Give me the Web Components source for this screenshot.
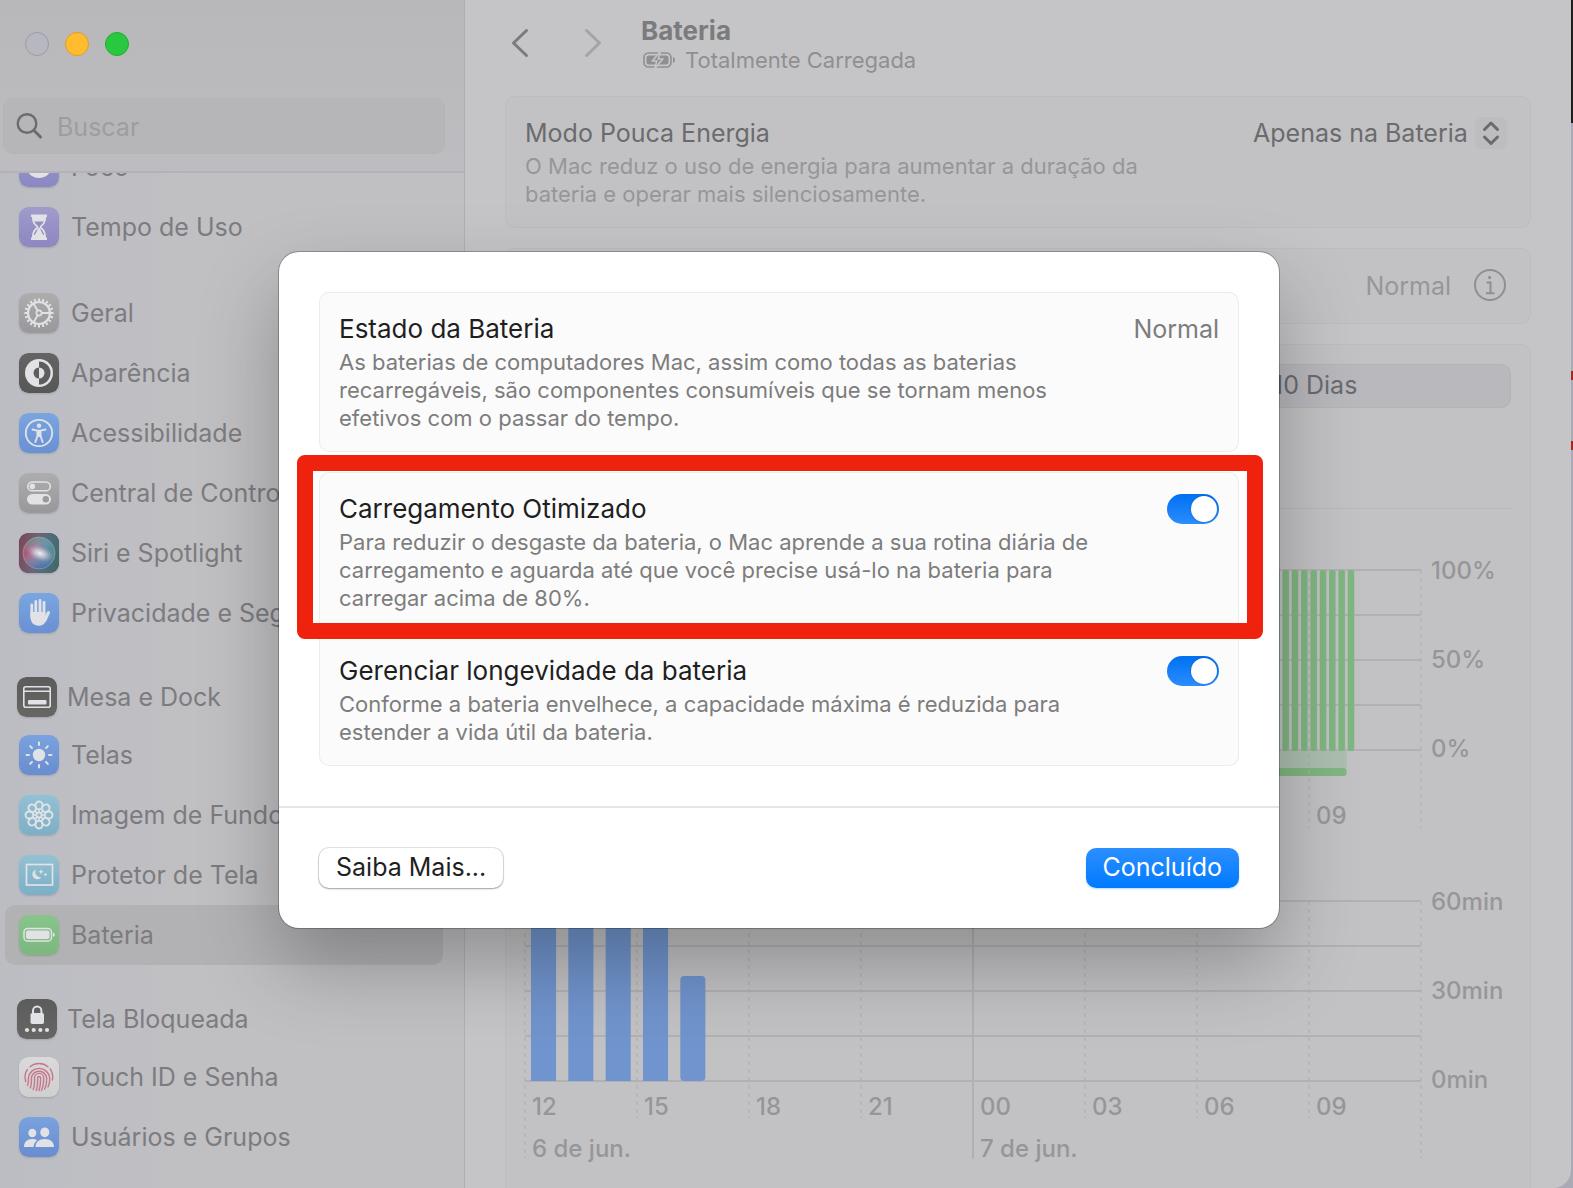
<!DOCTYPE html>
<html lang="pt-BR">
<head>
<meta charset="utf-8">
<title>Bateria</title>
<style>
    html, body {
        height: 100%;
        margin: 0;
        overflow: hidden;
    }

    body {
        font-family: Inter, "Liberation Sans", sans-serif;
        font-size: 25px;
        line-height: 34px;
        color: #6b6b6e;
        background:
            linear-gradient(#a5281f, #a5281f) right 371px / 2px 9px no-repeat,
            linear-gradient(#a5281f, #a5281f) right 441px / 2px 9px no-repeat,
            linear-gradient(#1f1f20, #1f1f20) right top / 2px 123px no-repeat,
            #a9aab6;
    }
</style>
</head>
<body>

<mac-window>
    <side-bar slot="sidebar">
        <side-group>
            <side-item icon="moon">Foco</side-item>
            <side-item icon="hourglass">Tempo de Uso</side-item>
        </side-group>
        <side-group>
            <side-item icon="gear">Geral</side-item>
            <side-item icon="contrast">Aparência</side-item>
            <side-item icon="access">Acessibilidade</side-item>
            <side-item icon="toggles">Central de Controle</side-item>
            <side-item icon="siri">Siri e Spotlight</side-item>
            <side-item icon="hand">Privacidade e Segurança</side-item>
        </side-group>
        <side-group>
            <side-item icon="dock" lead>Mesa e Dock</side-item>
            <side-item icon="sun">Telas</side-item>
            <side-item icon="flower">Imagem de Fundo</side-item>
            <side-item icon="saver">Protetor de Tela</side-item>
            <side-item icon="battery" selected>Bateria</side-item>
        </side-group>
        <side-group>
            <side-item icon="lock" lead>Tela Bloqueada</side-item>
            <side-item icon="finger">Touch ID e Senha</side-item>
            <side-item icon="users">Usuários e Grupos</side-item>
        </side-group>
    </side-bar>

    <pane-header slot="header">
        <span slot="title">Bateria</span>
        <span slot="status">Totalmente Carregada</span>
    </pane-header>

    <settings-card>
        <setting-row>
            <span slot="title">Modo Pouca Energia</span>
            <span slot="text">O Mac reduz o uso de energia para aumentar a duração da bateria e operar mais silenciosamente.</span>
            <popup-select slot="value" label="Modo Pouca Energia">Apenas na Bateria</popup-select>
        </setting-row>
    </settings-card>
    <settings-card>
        <setting-row>
            <span slot="title">Estado da Bateria</span>
            <info-value slot="value">Normal</info-value>
        </setting-row>
    </settings-card>
    <settings-card>
        <battery-usage></battery-usage>
    </settings-card>

    <mac-sheet slot="sheet">
        <settings-card>
            <setting-row>
                <span slot="title">Estado da Bateria</span>
                <span slot="text">As baterias de computadores Mac, assim como todas as baterias recarregáveis, são componentes consumíveis que se tornam menos efetivos com o passar do tempo.</span>
                <span slot="value">Normal</span>
            </setting-row>
        </settings-card>
        <settings-card>
            <setting-row switch marked>
                <span slot="title">Carregamento Otimizado</span>
                <span slot="text">Para reduzir o desgaste da bateria, o Mac aprende a sua rotina diária de carregamento e aguarda até que você precise usá-lo na bateria para carregar acima de 80%.</span>
            </setting-row>
            <setting-row switch>
                <span slot="title">Gerenciar longevidade da bateria</span>
                <span slot="text">Conforme a bateria envelhece, a capacidade máxima é reduzida para estender a vida útil da bateria.</span>
            </setting-row>
        </settings-card>
        <push-button slot="actions">Saiba Mais...</push-button>
        <push-button slot="actions" primary>Concluído</push-button>
    </mac-sheet>
</mac-window>

<script>
// [top colour, bottom colour, glyph] on a 40x40 tile
const W = "#e1e2e5";
const ray = (n, draw) => Array.from({length: n}, (_, i) => draw(i * 360 / n)).join("");
const ICONS = {
    moon: ["#9b97cf", "#8b87c2", `<circle cx="20" cy="18" r="13" fill="${W}"/>`],
    hourglass: ["#9f9bcb", "#8c87c1", `
        <path fill="${W}" d="M12 7.500h16v2.500h-1c0 5-1.500 7.500-4.800 10c3.300 2.500 4.800 5 4.800 10.500h1V33H12v-2.500h1c0-5.500 1.500-8 4.800-10.500C14.500 17.500 13 15 13 10h-1z"/>
        <path fill="#928dc3" d="M15.300 14h9.400c-.7 2-1.800 3.400-3.700 5v2.400c2.300 1.600 3.700 3.300 4.300 7L20.800 25h-1.600l-4.500 3.400c.6-3.700 2-5.400 4.300-7V19c-1.900-1.600-3-3-3.700-5z"/>
        <path fill="${W}" d="M15.500 12h9v2.500h-9zM20 19.500l5 10.500H15z"/>`],
    gear: ["#adadae", "#98989a", `
        <g fill="none" stroke="${W}"><circle cx="20" cy="20" r="11" stroke-width="2.200"/>
        <circle cx="20" cy="20" r="2.600" stroke-width="1.600"/>
        ${ray(20, a => `<path stroke-width="2" d="M32 20h2.600" transform="rotate(${a} 20 20)"/>`)}
        ${ray(3, a => `<path stroke-width="1.800" d="M22.600 20H31" transform="rotate(${a} 20 20)"/>`)}</g>`],
    contrast: ["#646464", "#575757", `
        <circle cx="20" cy="20" r="14" fill="${W}"/><path fill="#5d5d5d" d="M20 8.500a11.500 11.500 0 0 1 0 23z"/>
        <path fill="#5d5d5d" d="M20 14.500a5.500 5.500 0 0 0 0 11z"/><path fill="${W}" d="M20 14.500a5.500 5.500 0 0 1 0 11z"/>`],
    access: ["#7aa6e0", "#6990d3", `
        <circle cx="20" cy="20" r="13.200" fill="none" stroke="${W}" stroke-width="1.800"/>
        <circle cx="20" cy="12.800" r="2.200" fill="${W}"/>
        <path fill="none" stroke="${W}" stroke-width="1.900" stroke-linecap="round" stroke-linejoin="round" d="M13.500 16.500l5 1.200h3l5-1.200M18.500 18v5L16.300 29M21.500 18v5l2.200 6"/>
        <path fill="${W}" d="M17.800 17.500h4.400v6.500h-4.400z"/>`],
    toggles: ["#adadae", "#98989a", `
        <rect x="8.800" y="9" width="22.500" height="8.800" rx="4.400" fill="none" stroke="${W}" stroke-width="1.600"/>
        <circle cx="13.300" cy="13.400" r="2.800" fill="${W}"/>
        <rect x="8" y="21" width="24" height="10.500" rx="5.250" fill="${W}"/><circle cx="26.800" cy="26.250" r="3.200" fill="#9a9a9c"/>`],
    siri: ["#77455a", "#3f4250", `
        <defs><linearGradient id="b" x1="0" y1=".4" x2="1" y2=".6"><stop offset="0" stop-color="#b84a68"/><stop offset=".4" stop-color="#a07c9a"/><stop offset=".7" stop-color="#5f8fa8"/><stop offset="1" stop-color="#4b8780"/></linearGradient>
        <linearGradient id="o" x1=".3" y1="0" x2=".5" y2="1"><stop offset="0" stop-color="#5a9a8c" stop-opacity=".8"/><stop offset=".45" stop-color="#7fa5ba" stop-opacity="0"/><stop offset="1" stop-color="#446ba8" stop-opacity=".9"/></linearGradient>
        <radialGradient id="w"><stop offset="0" stop-color="#eef2f3"/><stop offset=".45" stop-color="#d5cfdd" stop-opacity=".7"/><stop offset="1" stop-color="#b493b4" stop-opacity="0"/></radialGradient></defs>
        <rect width="40" height="40" rx="9" fill="#3c4a50"/><rect width="40" height="40" rx="9" fill="url(#b)" opacity=".5"/>
        <circle cx="20" cy="20" r="16" fill="url(#b)"/><circle cx="20" cy="20" r="16" fill="url(#o)" stroke="#a5b3b5" stroke-opacity=".5"/>
        <ellipse cx="21" cy="20" rx="14" ry="8" fill="url(#w)" transform="rotate(20 20 20)"/>`],
    hand: ["#7aa6e0", "#6990d3", `
        <g fill="none" stroke="${W}" stroke-width="2.800" stroke-linecap="round"><path d="M12.800 12v12M16.800 8.500V22M21 7.500V22M25 9.500V23"/><path stroke-width="3" d="M29.500 19.500L26 27"/></g>
        <path fill="${W}" d="M11.400 19h15v5.500l2.300-1.500c-1.400 5.500-3.700 9.800-8.500 9.800c-6 0-8.800-3.800-8.800-9.800z"/>`],
    dock: ["#5c5c5c", "#666664", `
        <rect x="6.800" y="9.800" width="26.400" height="20.400" rx="2" fill="none" stroke="${W}" stroke-width="1.600"/>
        <path stroke="${W}" stroke-width="1.400" d="M7 14.300h26"/><rect x="11" y="23" width="18.500" height="4.500" rx="1" fill="${W}"/>`],
    sun: ["#7aa2de", "#698dcf", `
        <circle cx="20" cy="20" r="6.200" fill="${W}"/>
        ${ray(8, a => `<path stroke="${W}" stroke-width="2" stroke-linecap="round" d="M30 20h2.500" transform="rotate(${a} 20 20)"/>`)}`],
    flower: ["#93c1d4", "#7cafc6", `
        <g fill="none" stroke="${W}" stroke-width="2">
        ${ray(8, a => `<ellipse cx="29.600" cy="20" rx="3.900" ry="3.600" transform="rotate(${a} 20 20)"/><path stroke-width="1.500" d="M23 20h3" transform="rotate(${a} 20 20)"/>`)}
        <circle cx="20" cy="20" r="2.600"/></g>`],
    saver: ["#93c1d4", "#7cafc6", `
        <rect x="7.500" y="9.500" width="26" height="20.500" fill="none" stroke="${W}" stroke-width="1.700"/>
        <path fill="${W}" d="M17 14.500a5 5 0 1 0 5.500 7.500a5 5 0 0 1-5.500-7.500z"/>
        <path fill="${W}" d="M22 14l.8 1.900l1.900.8l-1.900.8L22 19.400l-.8-1.900l-1.900-.8l1.900-.8zM26.500 17.500l.6 1.500l1.500.6l-1.500.6l-.6 1.500l-.6-1.500l-1.500-.6l1.500-.6z"/>`],
    battery: ["#88c58b", "#7bb77f", `
        <rect x="5" y="13.500" width="27.500" height="12.500" rx="3.600" fill="none" stroke="${W}" stroke-width="1.500"/>
        <rect x="7" y="15.500" width="23.500" height="8.500" rx="2" fill="${W}"/><path fill="${W}" d="M34 17.500c2.400 1 2.400 3.500 0 4.500z"/>`],
    lock: ["#5c5c5c", "#666664", `
        <rect x="13.500" y="14" width="13.500" height="11" rx="1.800" fill="${W}"/>
        <path fill="none" stroke="${W}" stroke-width="2" d="M16 14.500v-2.700a4.200 4.200 0 0 1 8.400 0v2.700"/>
        <g fill="${W}"><circle cx="10" cy="31" r="2.100"/><circle cx="16.700" cy="31" r="2.100"/><circle cx="23.400" cy="31" r="2.100"/><circle cx="30" cy="31" r="2.100"/></g>`],
    finger: ["#dadadb", "#cfcfd0", `
        <g fill="none" stroke="#c9768c" stroke-width="1.400" stroke-linecap="round">
        <path d="M11 9.800a14 14 0 0 1 18 0M6.700 24.500a14 14 0 0 1 1.700-12M31.200 12a14 14 0 0 1 2.200 11"/>
        <path d="M8.500 28.500c1-1.800 1-4 .9-7.500a10.700 10.700 0 0 1 21.300 0c.2 3.500-.4 6.500-1.700 9"/>
        <path d="M11.200 31c1.300-2.400 1.300-5.500 1.200-10a7.700 7.700 0 0 1 15.300 0c.2 4.500-.6 8-2 11"/>
        <path d="M14.200 32.500c1.500-3 1.400-7 1.300-11.500a4.600 4.600 0 0 1 9.200 0c.1 5-.7 9-2.200 12.500"/>
        <path d="M17.200 33.500c1.600-3.500 1.500-8 1.400-12.500a1.500 1.500 0 0 1 3 0c.1 5-.5 9-1.600 12.500"/></g>`],
    users: ["#7aa2de", "#698dcf", `
        <g fill="${W}"><ellipse cx="13.300" cy="16" rx="4" ry="4.300"/><ellipse cx="25.800" cy="15.300" rx="4.500" ry="4.900"/>
        <path d="M5 30c0-5 3-8 8.300-8c2 0 3.600.5 4.800 1.300c-2.200 1.700-3.300 4-3.600 6.700z"/>
        <path d="M16.500 30c0-5 3.500-8 9.300-8s9.200 3 9.200 8z"/></g>`]
};

class MacWindow extends HTMLElement {

    constructor() {
        super();
        this.attachShadow({mode: "open"});
    }

    connectedCallback() {
        this.shadowRoot.innerHTML = `
        <style>
            :host {
                position: relative;
                display: grid;
                grid-template-columns: 465px 1fr;
                height: 100vh;
                margin-right: 2px;
                overflow: hidden;
                border-radius: 0 0 18px 0;
                background: #c5c5c7;
            }

            main {
                min-width: 0;
                display: flex;
                flex-direction: column;
            }

            .cards {
                display: flex;
                flex-direction: column;
                gap: 20px;
                padding: 0 40px;
                --card-fill: #c2c2c4;
                --card-line: #bdbdbf;
                --text-soft: #969699;
            }
        </style>
        <slot name="sidebar"></slot>
        <main>
            <slot name="header"></slot>
            <div class="cards"><slot></slot></div>
        </main>
        <slot name="sheet"></slot>
        `
    }
}

class SideBar extends HTMLElement {

    constructor() {
        super();
        this.attachShadow({mode: "open"});
    }

    connectedCallback() {
        this.shadowRoot.innerHTML = `
        <style>
            :host {
                display: flex;
                flex-direction: column;
                min-height: 0;
                overflow: hidden;
                border-right: 1px solid #b0b0b3;
                background: linear-gradient(90deg, #bcbdc3, #c0c0c3 40%);
            }

            header {
                flex: none;
                border-bottom: 2px solid #b3b3b6;
                background: linear-gradient(#b8b8ba, #bdbdc1);
            }

            .lights {
                display: flex;
                gap: 16px;
                padding: 32px 25px 42px;
            }

            .lights button {
                width: 24px;
                height: 24px;
                padding: 0;
                border: 1px solid #9b9ba6;
                border-radius: 50%;
                background: #b6b7c1;
            }

            .lights .min {
                border-color: #dfa023;
                background: #febc2e;
            }

            .lights .max {
                border-color: #1fae30;
                background: #28c840;
            }

            .search {
                display: flex;
                align-items: center;
                gap: 13px;
                height: 54px;
                margin: 0 19px 17px 3px;
                padding: 0 12px;
                border: 1px solid #b4b4b7;
                border-radius: 11px;
                background: #b6b6b9;
            }

            .search svg {
                flex: none;
                width: 28px;
                height: 28px;
            }

            input {
                flex: 1;
                min-width: 0;
                height: 36px;
                padding: 2px 0 0;
                box-sizing: border-box;
                border: 0;
                outline: 0;
                font: inherit;
                color: inherit;
                background: none;
            }

            input::placeholder {
                color: #9d9da0;
            }

            nav {
                flex: 1;
                min-height: 0;
                overflow: hidden;
            }

            .list {
                display: flex;
                flex-direction: column;
                gap: 26px;
                margin-top: -36px;
                padding: 0 21px 0 5px;
            }
        </style>
        <header>
            <div class="lights">
                <button aria-label="Fechar"></button>
                <button class="min" aria-label="Minimizar"></button>
                <button class="max" aria-label="Ampliar"></button>
            </div>
            <label class="search">
                <svg viewBox="0 0 28 28" fill="none" stroke="#6b6b6e" stroke-width="2.400" stroke-linecap="round" aria-hidden="true"><circle cx="11" cy="11.500" r="9.300"/><path stroke-width="3" d="M18 18.500l6.500 6.500"/></svg>
                <input type="search" placeholder="Buscar" aria-label="Buscar">
            </label>
        </header>
        <nav><div class="list"><slot></slot></div></nav>
        `
    }
}

class SideGroup extends HTMLElement {

    constructor() {
        super();
        this.attachShadow({mode: "open"}).innerHTML = `
        <style>
            :host {
                display: flex;
                flex-direction: column;
            }
        </style>
        <slot></slot>
        `
    }
}

class SideItem extends HTMLElement {

    constructor() {
        super();
        this.attachShadow({mode: "open"});
    }

    connectedCallback() {
        const [top, bottom, glyph] = ICONS[this.getAttribute("icon")];
        this.shadowRoot.innerHTML = `
        <style>
            :host {
                display: block;
            }

            a {
                display: flex;
                align-items: center;
                gap: 12px;
                height: 60px;
                padding-left: 14px;
                border-radius: 10px;
                color: #7c7c80;
                text-decoration: none;
                white-space: nowrap;
            }

            :host([lead]) a {
                gap: 10px;
                height: 56px;
                padding-left: 12px;
            }

            :host([selected]) a {
                background: #b2b2b5;
            }

            svg {
                flex: none;
                width: 40px;
                height: 40px;
                border-radius: 9px;
                box-shadow: 0 1px 2px rgba(0, 0, 0, .14);
            }
        </style>
        <a href="#${this.getAttribute("icon")}">
            <svg viewBox="0 0 40 40" aria-hidden="true">
                <defs><linearGradient id="bg" x2="0" y2="1"><stop stop-color="${top}"/><stop offset="1" stop-color="${bottom}"/></linearGradient></defs>
                <rect width="40" height="40" rx="9" fill="url(#bg)"/>${glyph}
            </svg>
            <slot></slot>
        </a>
        `
    }
}

class PaneHeader extends HTMLElement {

    constructor() {
        super();
        this.attachShadow({mode: "open"});
    }

    connectedCallback() {
        this.shadowRoot.innerHTML = `
        <style>
            :host {
                flex: none;
                display: flex;
                align-items: flex-start;
                height: 82px;
                padding: 14px 40px 0;
            }

            button {
                width: 32px;
                height: 32px;
                margin: 13px 41px 0 0;
                padding: 0;
                border: 0;
                background: none;
                color: #7b7b7e;
            }

            button:disabled {
                color: #a4a4a7;
            }

            button svg {
                display: block;
                width: 32px;
                height: 32px;
            }

            .titles {
                margin-left: -10px;
            }

            h1 {
                margin: 0;
                font-size: 26px;
                line-height: 34px;
                color: #7b7b7e;
            }

            p {
                display: flex;
                align-items: center;
                gap: 9px;
                margin: 0;
                padding-left: 2px;
                font-size: 22px;
                line-height: 24px;
                color: #8f8f92;
            }

            p svg {
                width: 33px;
                height: 16px;
            }
        </style>
        <button aria-label="Voltar"><svg viewBox="0 0 32 32" fill="none" stroke="currentColor" stroke-width="3" stroke-linecap="round" stroke-linejoin="round"><path d="M21.500 3.500L8.500 16l13 12.500"/></svg></button>
        <button aria-label="Avançar" disabled><svg viewBox="0 0 32 32" fill="none" stroke="currentColor" stroke-width="3" stroke-linecap="round" stroke-linejoin="round"><path d="M8.500 3.500L21.500 16l-13 12.500"/></svg></button>
        <div class="titles">
            <h1><slot name="title"></slot></h1>
            <p>
                <svg viewBox="0 0 33 16" aria-hidden="true">
                    <rect x="1" y="1" width="27" height="14" rx="4.500" fill="none" stroke="#8f8f92" stroke-width="1.600"/>
                    <rect x="3.500" y="3.500" width="22" height="9" rx="2.500" fill="#8f8f92"/>
                    <path fill="#8f8f92" d="M30 5c2.600 1 2.600 5 0 6z"/>
                    <path fill="#8f8f92" stroke="#c5c5c7" stroke-width="1.600" d="M17.500-1L9.500 9h4.300l-2.300 8l8.200-10h-4.400z"/>
                </svg>
                <slot name="status"></slot>
            </p>
        </div>
        `
    }
}

class SettingsCard extends HTMLElement {

    constructor() {
        super();
        this.attachShadow({mode: "open"}).innerHTML = `
        <style>
            :host {
                display: block;
                border-radius: 10px;
                background: var(--card-fill);
                box-shadow: inset 0 0 0 1px var(--card-line);
            }

            ::slotted(setting-row:not(:first-child)) {
                border-top: 2px solid var(--card-line);
            }
        </style>
        <slot></slot>
        `
    }
}

class SettingRow extends HTMLElement {

    constructor() {
        super();
        this.attachShadow({mode: "open"});
    }

    connectedCallback() {
        const control = this.hasAttribute("switch")
            ? `<input type="checkbox" role="switch" id="switch" checked>`
            : `<slot name="value"></slot>`;
        this.shadowRoot.innerHTML = `
        <style>
            :host {
                position: relative;
                display: block;
                padding: 20px;
            }

            /* marker drawn around the row, over its neighbours */
            :host([marked])::after {
                content: "";
                position: absolute;
                z-index: 1;
                inset: -17px -24px -7px -22px;
                border: 16px solid #ee220d;
                border-radius: 8px;
                pointer-events: none;
            }

            .head {
                display: flex;
                align-items: center;
                justify-content: space-between;
            }

            label {
                font-size: var(--title-size, 25px);
            }

            .value {
                display: flex;
                align-items: center;
                color: var(--text-soft);
            }

            ::slotted([slot="text"]) {
                display: block;
                max-width: 770px;
                margin-top: 2px;
                font-size: 22px;
                line-height: 28px;
                color: var(--text-soft);
            }

            :host-context(main) ::slotted([slot="text"]) {
                max-width: 640px;
            }

            input {
                appearance: none;
                display: flex;
                justify-content: flex-end;
                box-sizing: border-box;
                width: 52px;
                height: 30px;
                margin: 0;
                padding: 2px;
                border-radius: 15px;
                background: linear-gradient(#0070f2, #2b8dff);
            }

            input::before {
                content: "";
                width: 26px;
                height: 26px;
                border-radius: 50%;
                background: #fff;
                box-shadow: 0 0 2px rgba(0, 0, 0, .3);
            }
        </style>
        <div class="head">
            <label for="switch"><slot name="title"></slot></label>
            <div class="value">${control}</div>
        </div>
        <slot name="text"></slot>
        `
    }
}

class PopupSelect extends HTMLElement {

    constructor() {
        super();
        this.attachShadow({mode: "open"});
    }

    connectedCallback() {
        this.shadowRoot.innerHTML = `
        <style>
            :host {
                position: relative;
                display: block;
                margin-right: 4px;
                color: #6b6b6e;
            }

            select {
                appearance: none;
                display: block;
                height: 34px;
                padding: 0 39px 0 0;
                border: 0;
                font: inherit;
                color: inherit;
                background: none;
            }

            svg {
                position: absolute;
                top: 1px;
                right: 0;
                width: 32px;
                height: 32px;
                border-radius: 7px;
                background: #bdbdbf;
                pointer-events: none;
            }
        </style>
        <select aria-label="${this.getAttribute("label")}"><option>${this.textContent}</option></select>
        <svg viewBox="0 0 32 32" fill="none" stroke="#6b6b6e" stroke-width="3" stroke-linecap="round" stroke-linejoin="round" aria-hidden="true"><path d="M9.500 12.500L16 6l6.500 6.500M9.500 20l6.500 6.500l6.500-6.500"/></svg>
        `
    }
}

class InfoValue extends HTMLElement {

    constructor() {
        super();
        this.attachShadow({mode: "open"}).innerHTML = `
        <style>
            :host {
                display: flex;
                align-items: center;
                gap: 22px;
                margin-right: 4px;
            }

            button {
                height: 36px;
                padding: 0;
                border: 0;
                background: none;
            }

            svg {
                display: block;
                width: 34px;
                height: 34px;
            }
        </style>
        <slot></slot>
        <button aria-label="Informações">
            <svg viewBox="0 0 34 34" fill="none" stroke="#8f8f92" stroke-width="2"><circle cx="17" cy="16" r="15"/><circle cx="16.600" cy="8.500" r="1" fill="#8f8f92" stroke-width="1.200"/><path d="M13.500 13.500h4V24M13 24.200h8.500"/></svg>
        </button>
        `
    }
}

class BatteryUsage extends HTMLElement {

    constructor() {
        super();
        this.attachShadow({mode: "open"}).innerHTML = `
        <style>
            :host {
                display: block;
                padding: 20px 20px 40px;
            }

            .tabs {
                display: grid;
                grid-template-columns: 1fr 1fr;
                column-gap: 12px;
                box-sizing: border-box;
                height: 44px;
                border: 1px solid #b3b3b7;
                border-radius: 10px;
                background: #b8b8bd;
            }

            .tabs button {
                height: 40px;
                padding: 0;
                border: 0;
                font: inherit;
                color: inherit;
                background: none;
            }

            hr {
                margin: 100px 0 61px;
                border: 0;
                border-top: 1px solid #b8b8ba;
            }

            usage-chart + usage-chart {
                margin-top: 72px;
            }
        </style>
        <div class="tabs">
            <button aria-label="Últimas 24 Horas"></button>
            <button>Últimos 10 Dias</button>
        </div>
        <hr>
        <usage-chart kind="level" scale="100%,50%,0%"></usage-chart>
        <usage-chart kind="screen" scale="60min,30min,0min" days="6 de jun.,7 de jun."></usage-chart>
        `
    }
}

class UsageChart extends HTMLElement {

    constructor() {
        super();
        this.attachShadow({mode: "open"});
    }

    // the time axis covers 24 hours, x is a share of the plot's width
    bars() {
        if (this.getAttribute("kind") == "screen") {
            return [180, 180, 180, 180, 105].map((height, hour) =>
                `<rect class="screen" x="${(hour + .16) / 24 * 100}%" y="${180 - height}" width="2.800%" height="${height}" rx="${height < 180 ? 4 : 0}"/>`
            ).join("");
        }
        let out = `<rect class="charge" x="50%" y="181" width="41.700%" height="18"/><rect class="level" x="50%" y="198" width="41.700%" height="8" rx="3"/>`;
        for (let i = 48; i < 89; i++) {
            out += `<rect class="level" x="${(i + .15) / 96 * 100}%" y="0" width=".73%" height="181" rx="2"/>`;
        }
        return out;
    }

    connectedCallback() {
        const days = (this.getAttribute("days") || "").split(",").filter(Boolean);
        const long = 258;
        const short = days.length ? 218 : 258;
        const rows = [0, 45, 90, 135, 180].map(y => `<line class="row" x1="0" x2="100%" y1="${y}" y2="${y}"/>`).join("");
        const ticks = Array.from({length: 9}, (_, i) =>
            `<line class="${i == 4 ? "solid" : "dash"}" x1="${i * 12.5}%" x2="${i * 12.5}%" y1="0" y2="${i % 4 ? short : long}"/>`
        ).join("");
        const hours = ["12", "15", "18", "21", "00", "03", "06", "09"];
        this.shadowRoot.innerHTML = `
        <style>
            :host {
                display: grid;
                grid-template-columns: 1fr 90px;
                font-size: 24px;
                line-height: 26px;
                font-weight: 500;
                color: #969699;
            }

            .plot {
                height: 180px;
            }

            svg {
                display: block;
                width: 100%;
                height: 180px;
                overflow: visible;
            }

            .row, .dash, .solid {
                stroke: #b1b1b3;
                stroke-width: 2;
            }

            .dash {
                stroke: #adadaf;
                stroke-width: 1;
                stroke-dasharray: 4 4;
            }

            .screen {
                fill: #7094cd;
            }

            .level {
                fill: #7fb681;
            }

            .charge {
                fill: #acbfae;
            }

            .scale {
                display: flex;
                flex-direction: column;
                justify-content: space-between;
                margin: -12px 0;
                padding-left: 10px;
            }

            .hours, .days {
                display: grid;
                grid-template-columns: repeat(8, 1fr);
                padding-top: 53px;
            }

            .days {
                grid-template-columns: 1fr 1fr;
                grid-row: 3;
                padding-top: 16px;
            }

            :host([days]) .hours {
                padding-top: 13px;
            }

            span {
                padding-left: 7px;
            }

            .scale span {
                padding: 0;
            }
        </style>
        <div class="plot">
            <svg aria-hidden="true">${rows}${this.getAttribute("kind") == "screen" ? ticks + this.bars() : this.bars() + ticks}</svg>
        </div>
        <div class="scale">${this.getAttribute("scale").split(",").map(t => `<span>${t}</span>`).join("")}</div>
        <div class="hours">${hours.map(t => `<span>${t}</span>`).join("")}</div>
        ${days.length ? `<div class="days">${days.map(t => `<span>${t}</span>`).join("")}</div>` : ""}
        `
    }
}

class MacSheet extends HTMLElement {

    constructor() {
        super();
        this.attachShadow({mode: "open"}).innerHTML = `
        <style>
            :host {
                position: absolute;
                inset: 0 13px 0 0;
                display: flex;
                justify-content: center;
                align-items: flex-start;
                padding-top: 252px;
            }

            dialog {
                position: static;
                width: 1000px;
                max-width: 100%;
                margin: 0;
                padding: 0;
                border: 0;
                border-radius: 20px;
                color: #1f1f1f;
                background: #fff;
                box-shadow: 0 0 0 1px rgba(0, 0, 0, .25), 0 36px 80px rgba(0, 0, 0, .27);
                --card-fill: #fbfbfb;
                --card-line: #ececec;
                --text-soft: #7d7d7d;
                --title-size: 26px;
            }

            .body {
                display: flex;
                flex-direction: column;
                gap: 20px;
                padding: 40px;
            }

            footer {
                display: flex;
                justify-content: space-between;
                padding: 40px;
                border-top: 2px solid #e5e5e5;
            }
        </style>
        <dialog open aria-label="Estado da Bateria">
            <div class="body"><slot></slot></div>
            <footer><slot name="actions"></slot></footer>
        </dialog>
        `
    }
}

class PushButton extends HTMLElement {

    constructor() {
        super();
        this.attachShadow({mode: "open"}).innerHTML = `
        <style>
            :host {
                display: block;
            }

            button {
                display: block;
                height: 40px;
                padding: 0 17px 2px;
                border: 0;
                border-radius: 10px;
                font: inherit;
                color: #1f1f1f;
                background: #fff;
                box-shadow: 0 0 0 1px rgba(0, 0, 0, .1), 0 1px 2px rgba(0, 0, 0, .3);
            }

            :host([primary]) button {
                color: #fff;
                background: linear-gradient(#2c8fff, #007aff);
                box-shadow: 0 1px 2px rgba(0, 122, 255, .3);
            }
        </style>
        <button><slot></slot></button>
        `
    }
}

customElements.define("mac-window", MacWindow);
customElements.define("side-bar", SideBar);
customElements.define("side-group", SideGroup);
customElements.define("side-item", SideItem);
customElements.define("pane-header", PaneHeader);
customElements.define("settings-card", SettingsCard);
customElements.define("setting-row", SettingRow);
customElements.define("popup-select", PopupSelect);
customElements.define("info-value", InfoValue);
customElements.define("usage-chart", UsageChart);
customElements.define("battery-usage", BatteryUsage);
customElements.define("mac-sheet", MacSheet);
customElements.define("push-button", PushButton);
</script>
</body>
</html>
